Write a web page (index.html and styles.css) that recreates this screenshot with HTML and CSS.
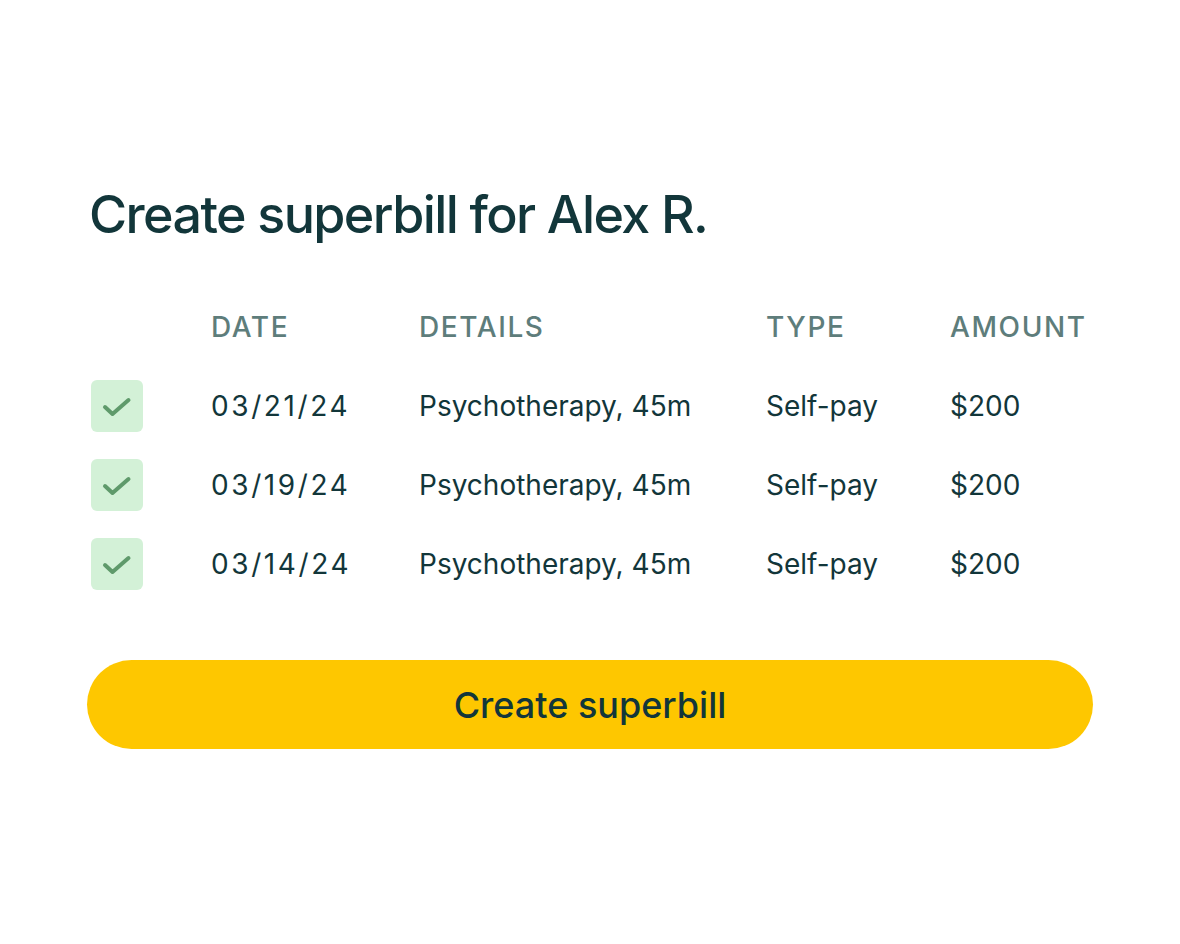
FILE: index.html
```html
<!DOCTYPE html>
<html lang="en">
<head>
<meta charset="utf-8">
<title>Create superbill</title>
<link rel="stylesheet" href="styles.css">
</head>
<body>
<main class="card">
  <h1 class="title">Create superbill for Alex R.</h1>
  <div class="table">
    <div class="row head">
      <span></span>
      <span>DATE</span>
      <span>DETAILS</span>
      <span>TYPE</span>
      <span>AMOUNT</span>
    </div>
    <div class="row item">
      <span class="check"><svg viewBox="0 0 52 52" width="52" height="52"><path d="M14 27l7.5 7L37.5 20" fill="none" stroke="#5f9a6b" stroke-width="4" stroke-linecap="round" stroke-linejoin="round"/></svg></span>
      <span class="date">03/21/24</span>
      <span>Psychotherapy, 45m</span>
      <span>Self-pay</span>
      <span>$200</span>
    </div>
    <div class="row item">
      <span class="check"><svg viewBox="0 0 52 52" width="52" height="52"><path d="M14 27l7.5 7L37.5 20" fill="none" stroke="#5f9a6b" stroke-width="4" stroke-linecap="round" stroke-linejoin="round"/></svg></span>
      <span class="date">03/19/24</span>
      <span>Psychotherapy, 45m</span>
      <span>Self-pay</span>
      <span>$200</span>
    </div>
    <div class="row item">
      <span class="check"><svg viewBox="0 0 52 52" width="52" height="52"><path d="M14 27l7.5 7L37.5 20" fill="none" stroke="#5f9a6b" stroke-width="4" stroke-linecap="round" stroke-linejoin="round"/></svg></span>
      <span class="date">03/14/24</span>
      <span>Psychotherapy, 45m</span>
      <span>Self-pay</span>
      <span>$200</span>
    </div>
  </div>
  <button class="btn" type="button">Create superbill</button>
</main>
</body>
</html>
```
FILE: styles.css
```css
* { box-sizing: border-box; }
html, body { margin: 0; padding: 0; background: #ffffff; }
body {
  width: 1180px;
  height: 944px;
  font-family: Inter, "Noto Sans", sans-serif;
  color: #12363a;
}
.card {
  padding: 180px 87px 0 89px;
  display: flex;
  flex-direction: column;
}
.title {
  margin: 0;
  font-size: 52px;
  font-weight: 500;
  letter-spacing: -1.6px;
  line-height: 70px;
}
.table {
  margin-top: 47px;
  display: flex;
  flex-direction: column;
}
.row {
  display: grid;
  grid-template-columns: 122px 208px 347px 184px 1fr;
  align-items: center;
}
.head {
  height: 60px;
  font-size: 28px;
  font-weight: 500;
  letter-spacing: 1.6px;
  color: #5e7d7b;
  margin-bottom: 9px;
}
.item {
  height: 79px;
  font-size: 28px;
  font-weight: 400;
}
.date {
  letter-spacing: 2.6px;
}
.check {
  width: 52px;
  height: 52px;
  margin-left: 2px;
  border-radius: 6px;
  background: #d3f1d7;
  display: flex;
  align-items: center;
  justify-content: center;
}
.btn {
  margin-top: 57px;
  margin-left: -2px;
  height: 89px;
  border: none;
  border-radius: 45px;
  background: #fec700;
  color: #12363a;
  font-family: Inter, "Noto Sans", sans-serif;
  font-size: 36px;
  font-weight: 500;
  cursor: pointer;
}
```
